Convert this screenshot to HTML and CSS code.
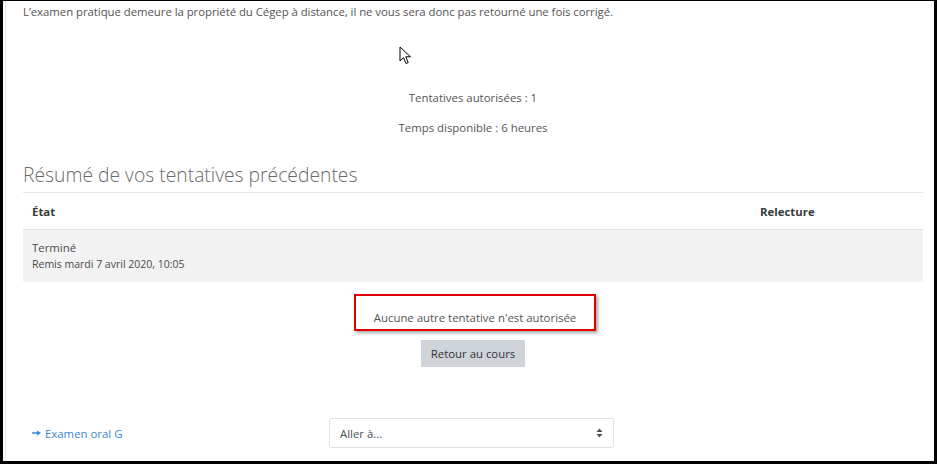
FILE: index.html
```html
<!DOCTYPE html>
<html lang="fr">
<head>
<meta charset="utf-8">
<link rel="stylesheet" href="styles.css">
</head>
<body>
<div class="frame">
  <div class="content">
    <p class="intro">L’examen pratique demeure la propriété du Cégep à distance, il ne vous sera donc pas retourné une fois corrigé.</p>
    <div class="info">
      <p>Tentatives autorisées : 1</p>
      <p>Temps disponible : 6 heures</p>
    </div>
    <h3 class="summary">Résumé de vos tentatives précédentes</h3>
    <table class="attempts">
      <thead>
        <tr><th class="col-state">État</th><th class="col-review">Relecture</th></tr>
      </thead>
      <tbody>
        <tr><td class="col-state"><span>Terminé</span><span class="small">Remis mardi 7 avril 2020, 10:05</span></td><td></td></tr>
      </tbody>
    </table>
    <div class="actions">
      <div class="notice">Aucune autre tentative n'est autorisée</div>
      <button class="btn">Retour au cours</button>
    </div>
    <div class="nav">
      <a class="prev" href="#"><svg class="arrow" width="9" height="6" viewBox="0 0 9 6"><path d="M0 2.2 H5 V0.5 L9 3 L5 5.5 V3.8 H0 Z" fill="#3d85d0"/></svg>Examen oral G</a>
      <div class="jump"><span>Aller à...</span>
        <svg width="7" height="10" viewBox="0 0 7 10"><path d="M3.5 0.5 L6.5 4 H0.5Z M3.5 9.5 L6.5 6 H0.5Z" fill="#495057"/></svg>
      </div>
    </div>
  </div>
  <svg class="cursor" width="14" height="20" viewBox="0 0 14 20"><path d="M1 1 L1 15 L4.5 11.6 L7 17.5 L9.2 16.6 L6.8 10.8 L11.5 10.8 Z" fill="#fff" stroke="#000" stroke-width="1" stroke-linejoin="round"/></svg>
</div>
</body>
</html>
```
FILE: styles.css
```css
html, body { margin: 0; padding: 0; background: #fff; }
body { font-family: "Open Sans", "Noto Sans", sans-serif; color: #4e4e4e; width: 937px; height: 464px; overflow: hidden; }
.frame {
  position: relative;
  box-sizing: border-box;
  width: 937px; height: 464px;
  border-left: 3px solid #000;
  border-right: 3px solid #000;
  border-bottom: 3px solid #000;
  border-top: 1px solid #000;
  padding-left: 2px;
}
.content {
  box-sizing: border-box;
  height: 100%;
  border-left: 1px solid #e8e8e8;
  padding: 0 11px 0 17px;
  display: flex; flex-direction: column;
}
.intro { margin: 3px 0 0; font-size: 11.4px; line-height: 16px; color: #555; letter-spacing: -0.05px; }
.info { margin-top: 70px; text-align: center; font-size: 11.4px; line-height: 16px; color: #555; }
.info p { margin: 0 0 14px; }
.summary { margin: 12px 0 0; font-size: 19.3px; font-weight: 300; line-height: 26px; color: #6a6a6a; padding-bottom: 4px; border-bottom: 1px solid #e6e6e6; }
.attempts { border-collapse: collapse; width: 100%; font-size: 11.4px; }
.attempts th { text-align: left; font-weight: 700; color: #3a3a3a; height: 36px; padding: 0 9px; border-bottom: 1px solid #e2e2e2; }
.attempts th.col-review { width: 154px; padding-left: 0; }
.attempts td { background: #f2f2f2; height: 52px; padding: 0 9px; vertical-align: middle; color: #4a4a4a; }
.attempts td span { display: block; line-height: 17px; }
.attempts td .small { font-size: 10.5px; }
.actions { display: flex; flex-direction: column; align-items: center; margin-top: 12px; }
.notice {
  box-sizing: border-box;
  width: 242px; height: 37px;
  border: 2px solid #e00000;
  box-shadow: 2px 2px 3px rgba(0,0,0,0.35);
  font-size: 11.4px; color: #555;
  display: flex; align-items: flex-end; justify-content: center;
  padding-bottom: 4px; margin-left: 4px;
}
.btn {
  margin-top: 9px;
  font-family: inherit; font-size: 11.4px; color: #333;
  background: #ced4da; border: none;
  width: 104px; height: 27px; padding: 0;
}
.nav { display: flex; align-items: center; margin-top: 51px; }
.prev { color: #3d85d0; text-decoration: none; font-size: 11.4px; margin-left: 9px; width: 297px; display: flex; align-items: center; gap: 4px; }
.arrow { flex: none; }
.jump {
  box-sizing: border-box;
  width: 285px; height: 30px;
  border: 1px solid #dfe3e7; border-radius: 2px;
  display: flex; align-items: center; justify-content: space-between;
  padding: 0 10px 0 10px;
  font-size: 11.4px; color: #495057;
}
.cursor { position: absolute; left: 396px; top: 45px; }
```
